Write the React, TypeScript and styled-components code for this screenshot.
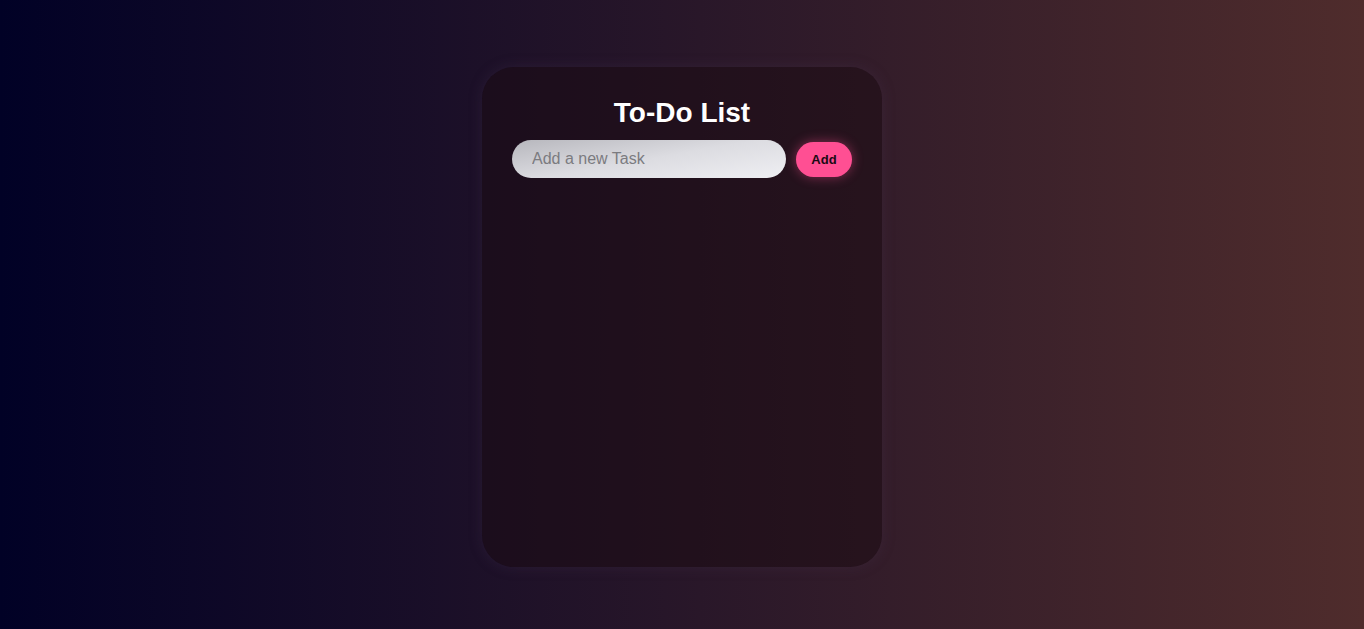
import styled, { createGlobalStyle } from "styled-components";

const GlobalStyle = createGlobalStyle`
  * {
    box-sizing: border-box;
  }
  html, body {
    margin: 0;
    padding: 0;
    height: 100%;
  }
  body {
    font-family: "Liberation Sans", Arial, sans-serif;
    background: linear-gradient(to right, #010126, #4f2c2c);
    min-height: 100vh;
  }
`;

const App = () => {
  return (
    <>
      <GlobalStyle />
      <Page>
        {/* カード */}
        <Card>
          <Title>To-Do List</Title>
          {/* 入力エリア */}
          <InputRow>
            <TaskInput placeholder="Add a new Task" />
            <AddButton>Add</AddButton>
          </InputRow>
          <TaskList />
        </Card>
      </Page>
    </>
  );
};

const Page = styled.main`
  height: 100vh;
  display: flex;
  justify-content: center;
  padding-top: 67px;
`;

const Card = styled.section`
  width: 400px;
  height: 500px;
  padding: 30px;
  border-radius: 32px;
  background: rgba(25, 10, 15, 0.5);
  box-shadow: 0 0 14px rgba(80, 60, 90, 0.25);
  display: flex;
  flex-direction: column;
`;

const Title = styled.h1`
  margin: 0 0 11px;
  color: #fff;
  font-size: 28px;
  line-height: 32px;
  font-weight: 700;
  text-align: center;
`;

const InputRow = styled.div`
  display: flex;
  align-items: center;
  gap: 10px;
`;

const TaskInput = styled.input`
  flex: 1;
  height: 38px;
  border: none;
  border-radius: 20px;
  padding: 0 20px;
  font-family: "Liberation Sans", Arial, sans-serif;
  font-size: 16px;
  color: #333;
  background: linear-gradient(170deg, #b7b7bd 0%, #dcdce1 50%, #efeff3 100%);
  outline: none;

  &::placeholder {
    color: #7b7b80;
  }
`;

const AddButton = styled.button`
  width: 56px;
  height: 35px;
  border: none;
  border-radius: 18px;
  background: #ff4f93;
  color: #1a0a12;
  font-family: "Liberation Sans", Arial, sans-serif;
  font-weight: 700;
  font-size: 13px;
  box-shadow: 0 0 12px rgba(255, 79, 147, 0.45);
  cursor: pointer;
`;

const TaskList = styled.ul`
  list-style: none;
  margin: 0;
  padding: 0;
`;

export default App;
